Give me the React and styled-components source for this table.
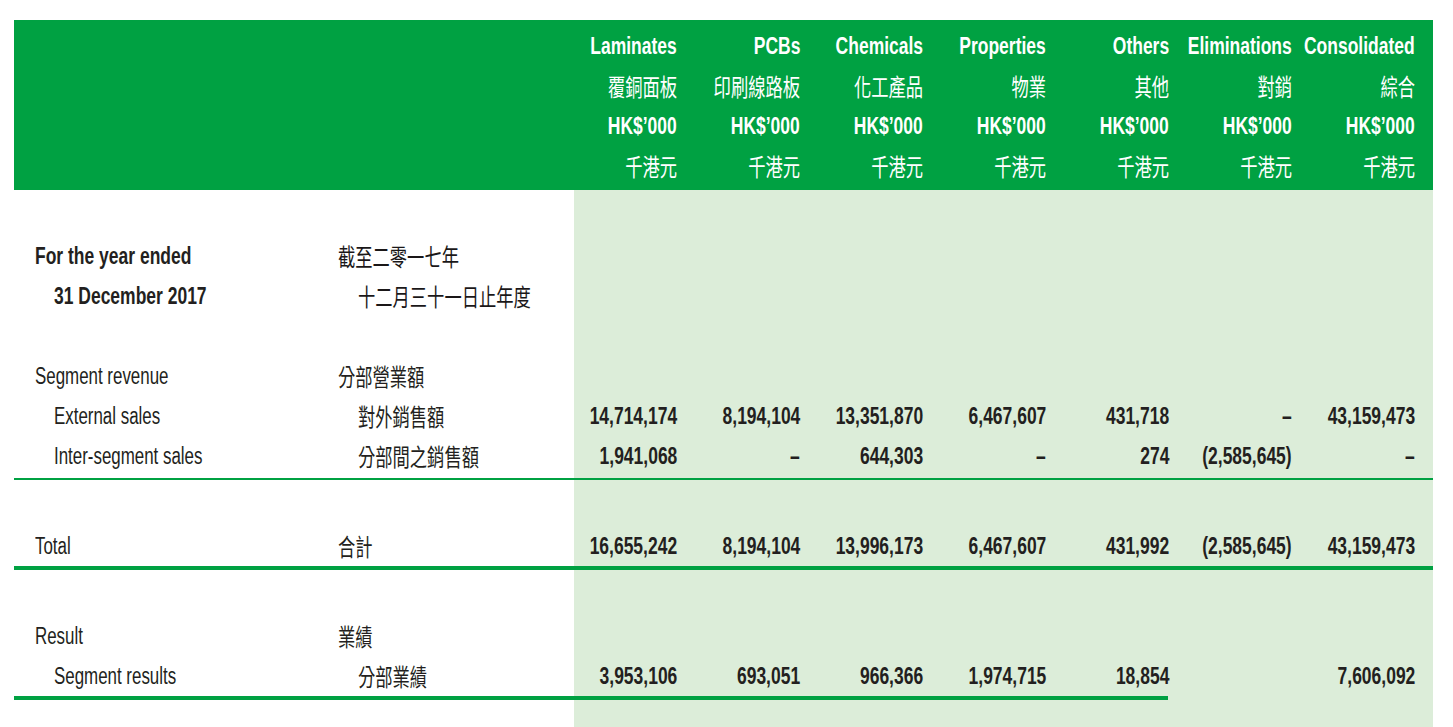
import React from 'react';
import styled, { createGlobalStyle } from 'styled-components';

const GlobalStyle = createGlobalStyle`
  html, body {
    margin: 0;
    padding: 0;
    background: #ffffff;
  }
  body {
    font-family: "Liberation Sans", Arial, "Noto Sans CJK TC", sans-serif;
    color: #231f20;
  }
`;

const GREEN = '#00a142';
const PANEL = '#dcedd9';
const COLS = '324px 234px repeat(7, 123px)';

const Page = styled.div`
  padding: 20px 20px 0 14px;
  width: 1419px;
`;

const Header = styled.div`
  display: grid;
  grid-template-columns: ${COLS};
  background: ${GREEN};
  color: #ffffff;
  padding: 6px 0 4px;
  height: 170px;
  box-sizing: border-box;
`;

const HeadCell = styled.div`
  display: flex;
  flex-direction: column;
  align-items: flex-end;
  padding-right: 18px;
`;

const HeadLine = styled.div`
  height: 40px;
  line-height: 40px;
  font-size: 23px;
  font-weight: bold;
  white-space: nowrap;
`;

/* condensed latin text: the reference uses a condensed grotesque */
const Cond = styled.span`
  display: inline-block;
  white-space: nowrap;
  transform: scaleX(${(p) => (p.$bold ? 0.76 : 0.735)});
  transform-origin: ${(p) => (p.$right ? 'right' : 'left')} center;
`;

const Zh = styled.span`
  display: inline-block;
  font-family: "Noto Sans CJK TC", "Noto Sans CJK SC", sans-serif;
  font-size: 24px;
  font-weight: 400;
  color: ${(p) => (p.$dark ? '#1a1718' : 'inherit')};
  transform: scaleX(0.72);
  transform-origin: ${(p) => (p.$right ? 'right' : 'left')} center;
  white-space: nowrap;
`;

const Body = styled.div`
  display: flex;
  flex-direction: column;
  padding-top: 46px;
  min-height: 537px;
  box-sizing: border-box;
  background: linear-gradient(to right, #ffffff 560px, ${PANEL} 560px);
`;

const Row = styled.div`
  display: grid;
  grid-template-columns: ${COLS};
  height: 40px;
  line-height: 40px;
`;

const Spacer = styled.div`
  height: ${(p) => p.$h}px;
`;

const Rule = styled.div`
  height: ${(p) => p.$thick}px;
  background: ${GREEN};
  margin-top: ${(p) => p.$mt || 0}px;
  width: ${(p) => p.$width || '100%'};
`;

const EnLabel = styled.div`
  padding-left: ${(p) => (p.$indent ? 40 : 21)}px;
  font-size: 23px;
  font-weight: ${(p) => (p.$bold ? 'bold' : 'normal')};
  white-space: nowrap;
`;

const ZhLabel = styled.div`
  padding-left: ${(p) => (p.$indent ? 20 : 0)}px;
`;

const Num = styled.div`
  display: flex;
  justify-content: flex-end;
  min-width: 0;
  padding-right: 18px;
  font-size: 23px;
  font-weight: bold;
  white-space: nowrap;
`;

const columns = [
  ['Laminates', '覆銅面板'],
  ['PCBs', '印刷線路板'],
  ['Chemicals', '化工產品'],
  ['Properties', '物業'],
  ['Others', '其他'],
  ['Eliminations', '對銷'],
  ['Consolidated', '綜合'],
];

const DASH = '–';

const Line = ({ en, zh, indent, bold, values }) => (
  <Row>
    <EnLabel $indent={indent} $bold={bold}>
      <Cond $bold={bold}>{en}</Cond>
    </EnLabel>
    <ZhLabel $indent={indent}>
      {zh && <Zh $dark={bold}>{zh}</Zh>}
    </ZhLabel>
    {(values || Array(7).fill('')).map((v, i) => (
      <Num key={i}>{v && <Cond $bold $right>{v}</Cond>}</Num>
    ))}
  </Row>
);

export default function App() {
  return (
    <Page>
      <GlobalStyle />
      <Header>
        <div />
        <div />
        {columns.map(([en, zh]) => (
          <HeadCell key={en}>
            <HeadLine><Cond $bold $right>{en}</Cond></HeadLine>
            <HeadLine><Zh $right>{zh}</Zh></HeadLine>
            <HeadLine><Cond $bold $right>HK$’000</Cond></HeadLine>
            <HeadLine><Zh $right>千港元</Zh></HeadLine>
          </HeadCell>
        ))}
      </Header>
      <Body>
        <Line en="For the year ended" zh="截至二零一七年" bold />
        <Line en="31 December 2017" zh="十二月三十一日止年度" bold indent />
        <Spacer $h={40} />
        <Line en="Segment revenue" zh="分部營業額" />
        <Line
          en="External sales"
          zh="對外銷售額"
          indent
          values={['14,714,174', '8,194,104', '13,351,870', '6,467,607', '431,718', DASH, '43,159,473']}
        />
        <Line
          en="Inter-segment sales"
          zh="分部間之銷售額"
          indent
          values={['1,941,068', DASH, '644,303', DASH, '274', '(2,585,645)', DASH]}
        />
        <Rule $thick={2} $mt={2} />
        <Spacer $h={46} />
        <Line
          en="Total"
          zh="合計"
          values={['16,655,242', '8,194,104', '13,996,173', '6,467,607', '431,992', '(2,585,645)', '43,159,473']}
        />
        <Rule $thick={4} />
        <Spacer $h={46} />
        <Line en="Result" zh="業績" />
        <Line
          en="Segment results"
          zh="分部業績"
          indent
          values={['3,953,106', '693,051', '966,366', '1,974,715', '18,854', '', '7,606,092']}
        />
        <Rule $thick={4} $width="calc(100% - 265px)" />
      </Body>
    </Page>
  );
}
